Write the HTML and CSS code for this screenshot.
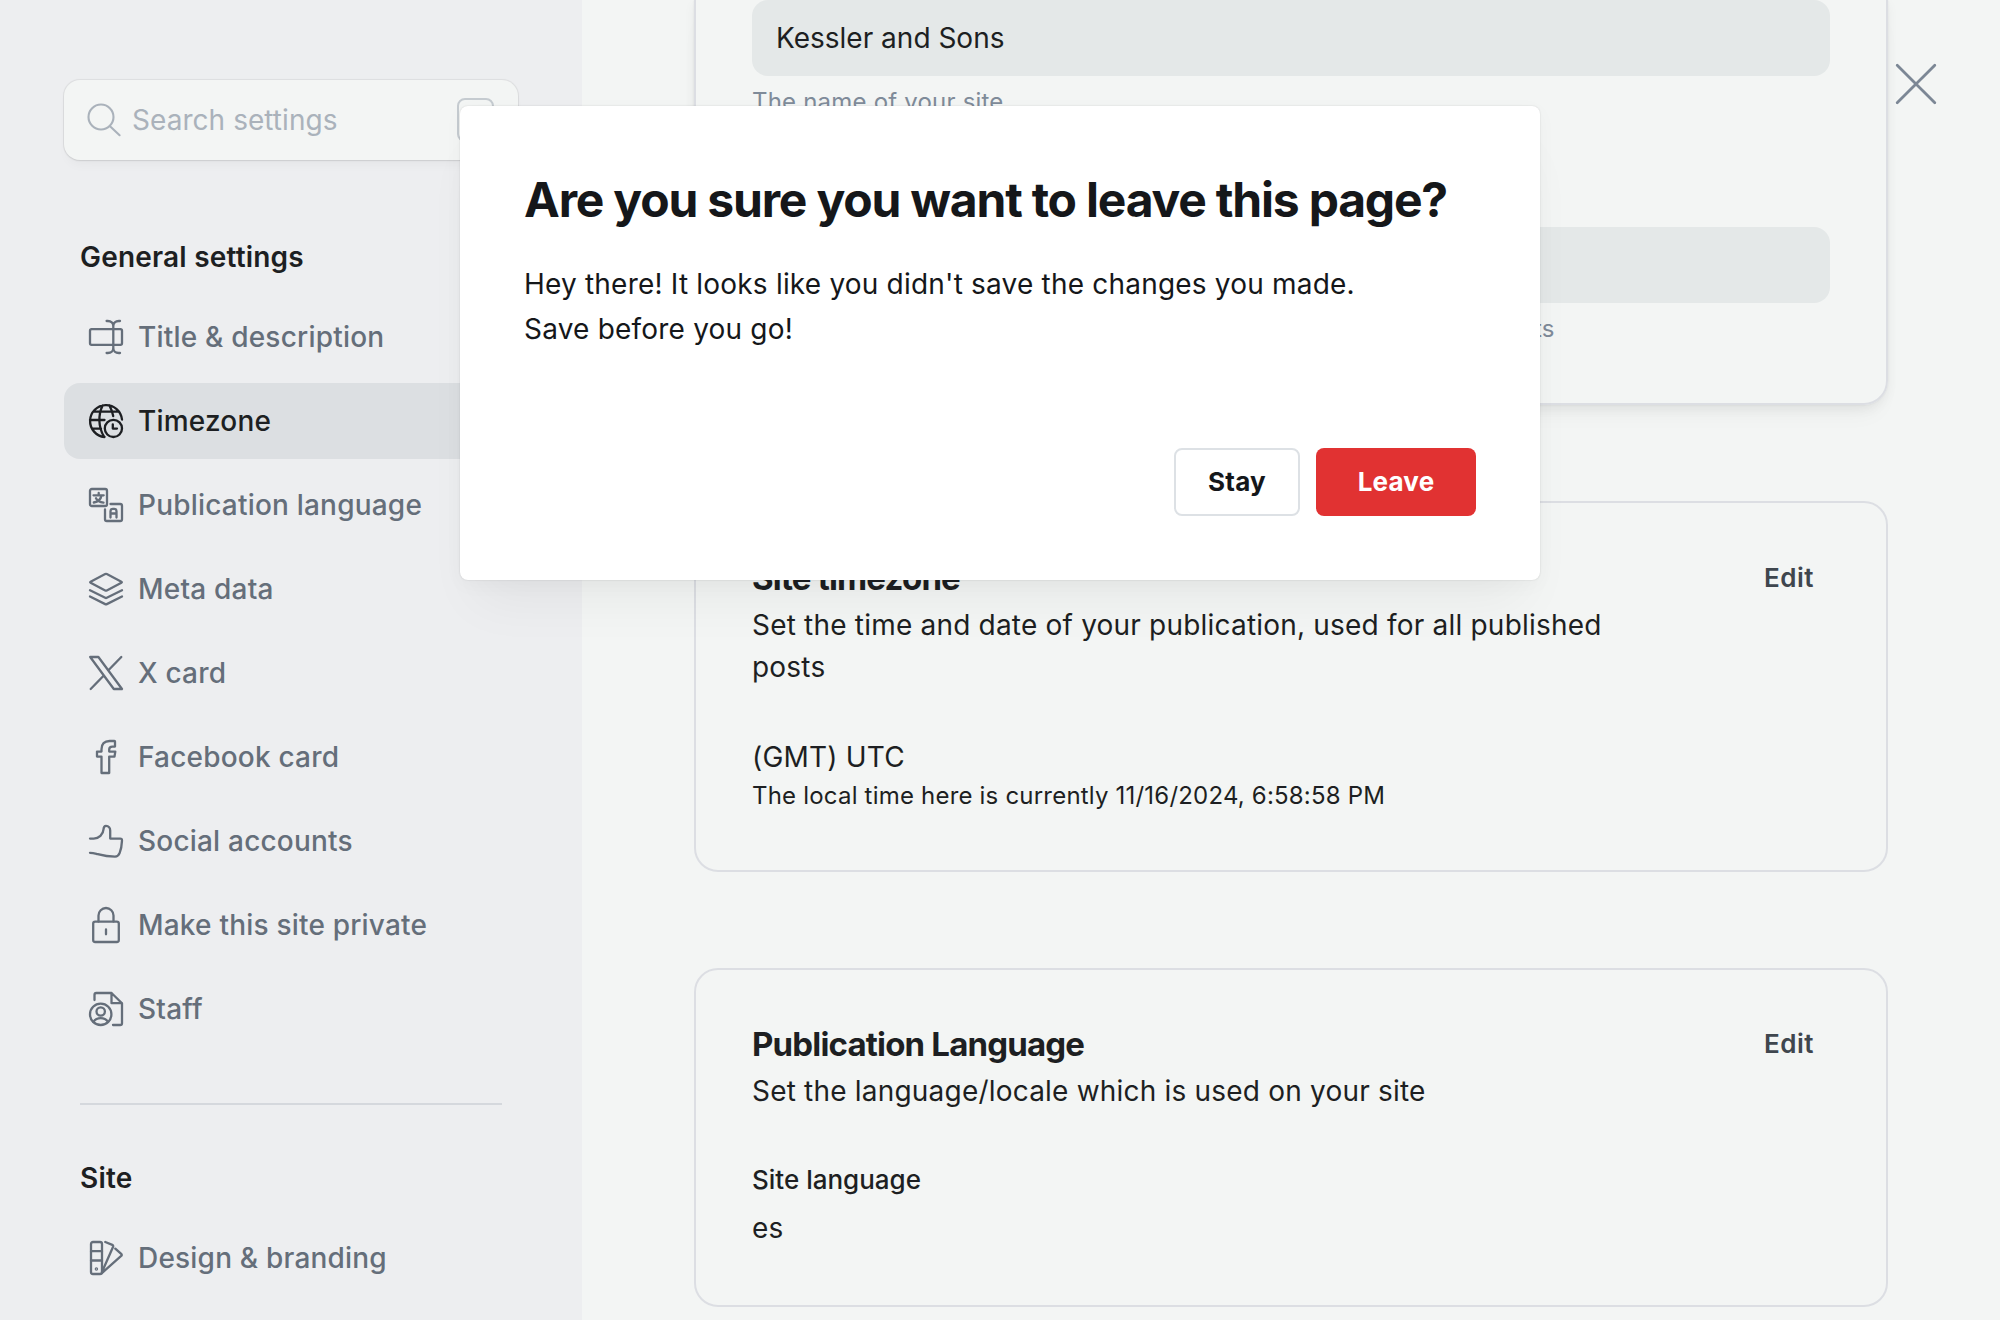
FILE: index.html
```html
<!DOCTYPE html>
<html lang="en">
<head>
<meta charset="utf-8">
<title>Settings</title>
<link rel="stylesheet" href="styles.css">
</head>
<body>
<div class="app">
  <aside class="sidebar">
    <div class="search">
      <svg class="search-icon" viewBox="0 0 34 34"><circle cx="14" cy="14" r="12.5"/><path d="M23 23.2l9.6 9"/></svg>
      <span class="search-text">Search settings</span>
      <span class="search-key"></span>
    </div>
    <h2 class="group-title">General settings</h2>
    <nav class="group">
      <a class="item"><svg class="icon" viewBox="0 0 34 34"><rect x="1" y="9.2" width="32" height="15.6" rx="1.6"/><path d="M24.3 6v22M17.6 1h1.2c3.3 0 5.5 2 5.5 5 0-3 2.2-5 5.5-5H31M17.6 33h1.2c3.3 0 5.5-2 5.5-5 0 3 2.2 5 5.5 5H31"/></svg>Title &amp; description</a>
      <a class="item item-active"><svg class="icon" viewBox="0 0 34 34"><path d="M33 15.5A16 16 0 1 0 15.5 33M4.3 7.7h25.4M1 16h14.5M3.2 24.6H12M13.6 1.5C9 11 9.2 23 15 32.7M20.4 1.5c1.9 3.400 3.2 7 3.8 10.500"/><circle cx="24.400" cy="24.400" r="8.600"/><path d="M23.800 20.300v4.300H28"/></svg>Timezone</a>
      <a class="item"><svg class="icon" viewBox="0 0 34 34"><rect x="1" y="1" width="17" height="17" rx="1.800"/><path d="M16 21.500v9.700A1.800 1.800 0 0 0 17.800 33h13.400a1.800 1.800 0 0 0 1.800-1.800V17.800a1.800 1.800 0 0 0-1.800-1.800H21.500M4.500 7.300h10.200M9.700 4.900v2.400M12.500 7.500c-.6 3.500-3.500 6.200-7.700 7M7 10.200c1.200 2.300 3.800 4 7.500 4.400M21.500 29.500v-6.300a2.300 2.300 0 0 1 2.300-2.300h1.400a2.300 2.300 0 0 1 2.300 2.300v6.300M21.500 25.500h6"/></svg>Publication language</a>
      <a class="item"><svg class="icon" viewBox="0 0 34 34"><path d="M16.200 2.100L1.600 9.700q-.9.500 0 1l14.600 7.800q.8.400 1.600 0l14.600-7.800q.9-.5 0-1L17.800 2.100q-.8-.4-1.600 0zM1 18.200l15.200 7.600q.8.400 1.600 0L33 18.200M1 24.500l15.200 7.600q.8.400 1.600 0L33 24.500"/></svg>Meta data</a>
      <a class="item"><svg class="icon" viewBox="0 0 34 34"><path d="M1.200 1h8.200L33 33h-8.200zM32.300 1L19.400 14.200M1.700 33l13.100-13.500"/></svg>X card</a>
      <a class="item"><svg class="icon" viewBox="0 0 34 34"><path d="M26 1.600v5h-2.600c-2.200 0-3.200.9-3.200 3v2h6.100l-.8 5h-5.300V33h-7.700V16.600H8v-5h4.500V9.200C12.500 4 15.300 1 20.600 1h4.800q.6 0 .6.600z"/></svg>Facebook card</a>
      <a class="item"><svg class="icon" viewBox="0 0 34 34"><path d="M1 14.600h3.700c5.200 0 9.500-4.300 9.800-9.200C14.600 3 15.500 1.800 17 1.800c2.600 0 4.200 2.200 4.200 4.800v8h10q1.900 0 1.800 2c-.2 4-1 8.900-2.300 12.300-1 2.600-2 3.700-4.700 3.700-9 0-14-1.600-18.500-2.800-2.200-.6-4.200-1-6.500-1"/></svg>Social accounts</a>
      <a class="item"><svg class="icon" viewBox="0 0 34 34"><rect x="4.200" y="13.600" width="25.600" height="20.400" rx="2"/><path d="M9.500 13.600V7.500a7.500 7.500 0 0 1 15 0v6.100M17 21.500v4.800"/></svg>Make this site private</a>
      <a class="item"><svg class="icon" viewBox="0 0 34 34"><circle cx="11.700" cy="22.300" r="10.700"/><circle cx="11.700" cy="19.500" r="4.200"/><path d="M4.400 29.800c3.500-4.900 11.100-4.900 14.600 0M5.500 8V2.800A1.800 1.800 0 0 1 7.300 1h15.200L33 11.200v20a1.800 1.800 0 0 1-1.800 1.800H24M22.500 1v10.200H33"/></svg>Staff</a>
    </nav>
    <hr class="divider">
    <h2 class="group-title">Site</h2>
    <nav class="group">
      <a class="item"><svg class="icon" viewBox="0 0 34 34"><rect x="2" y="1" width="11" height="32" rx="2"/><path d="M2 10.200h11M2 19.500h11M16.300 1l7 2.900q1.200.6.8 1.800L13 31M26.300 7.600l5.900 5.300q1 1 0 2L12.600 32.300"/><circle cx="7.400" cy="28" r=".6"/></svg>Design &amp; branding</a>
    </nav>
  </aside>

  <main class="content">
    <section class="card card-editing">
      <div class="input">Kessler and Sons</div>
      <p class="hint">The name of your site</p>
      <div class="input input-second"></div>
      <p class="hint">A short description, used in your theme, meta data and search results</p>
    </section>
    <section class="card">
      <header class="card-head"><h3 class="card-title">Site timezone</h3><a class="edit">Edit</a></header>
      <p class="desc">Set the time and date of your publication, used for all published posts</p>
      <p class="value">(GMT) UTC</p>
      <p class="note">The local time here is currently 11/16/2024, 6:58:58 PM</p>
    </section>
    <section class="card">
      <header class="card-head"><h3 class="card-title">Publication Language</h3><a class="edit">Edit</a></header>
      <p class="desc">Set the language/locale which is used on your site</p>
      <p class="label">Site language</p>
      <p class="value-small">es</p>
    </section>
  </main>

  <svg class="close" viewBox="0 0 40 40"><path d="M1.200 1.200l37.600 37.600M38.800 1.200L1.200 38.800"/></svg>

  <div class="modal">
    <h1 class="modal-title">Are you sure you want to leave this page?</h1>
    <p class="modal-text">Hey there! It looks like you didn't save the changes you made.</p>
    <p class="modal-text">Save before you go!</p>
    <div class="modal-actions">
      <a class="btn btn-stay">Stay</a>
      <a class="btn btn-leave">Leave</a>
    </div>
  </div>
</div>
</body>
</html>
```

FILE: styles.css
```css
* { box-sizing: border-box; margin: 0; padding: 0; }

body {
  font-family: Inter, "Liberation Sans", sans-serif;
  font-size: 28px;
  line-height: 42px;
  letter-spacing: .2px;
  color: #1d1f22;
  background: #f3f5f4;
}

svg { fill: none; stroke: currentColor; stroke-width: 2.3; stroke-linecap: round; stroke-linejoin: round; overflow: visible; }

.app { position: relative; display: flex; width: 2000px; height: 1320px; overflow: hidden; }

/* Sidebar */
.sidebar { width: 582px; flex: none; padding: 80px 64px 0; background: #edeef0; }
.search {
  display: flex; align-items: center; height: 80px; width: 454px; padding: 0 24px 0 23px;
  border-radius: 16px; background: #f3f5f4; color: #aab2bb; letter-spacing: .05px;
  box-shadow: 0 0 1px 1px rgba(0, 0, 0, .07), 0 1px 2px rgba(0, 0, 0, .05), 0 8px 12px -4px rgba(0, 0, 0, .04);
}
.search-icon { width: 34px; height: 34px; margin-right: 11px; stroke-width: 2.1; }
.search-text { flex: 1; }
.search-key { width: 37px; height: 44px; border: 2px solid #c5cbd0; border-radius: 8px; }
.group-title { margin: 77px 0 22px 16px; font-size: 28px; font-weight: 600; line-height: 40px; }
.group { display: flex; flex-direction: column; gap: 8px; width: 454px; }
.item {
  display: flex; align-items: center; gap: 15px; height: 76px; padding-left: 25px;
  border-radius: 16px; font-weight: 500; color: #656e7a;
}
.item-active { background: #dcdfe2; color: #1d1f22; }
.icon { width: 34px; height: 34px; flex: none; }
.divider { width: 422px; height: 2px; margin: 56px 0 0 16px; border: 0; background: #d5d8dd; }
.divider + .group-title { margin: 53px 0 22px 16px; }

/* Cards */
.content { width: 1194px; margin-left: 112px; display: flex; flex-direction: column; flex: none; gap: 96px; }
.card { padding: 53px 56px 56px; border: 2px solid #dcdee3; border-radius: 24px; flex: none; }
.card-editing {
  padding: 0 56px 57px; border-top: 0; border-radius: 0 0 24px 24px;
  box-shadow: 0 0 2px rgba(0, 0, 0, .08), 0 4px 12px rgba(0, 0, 0, .05), 0 16px 24px -10px rgba(0, 0, 0, .05);
}
.card-editing + .card { padding-top: 54px; }
.input { height: 76px; padding: 17px 24px; border-radius: 16px; background: #e4e8e8; letter-spacing: 0; }
.input-second { margin-top: 108px; }
.hint { margin-top: 9px; font-size: 24px; line-height: 34px; color: #7f8b99; }
.card-head { display: flex; justify-content: space-between; }
.card-title { font-size: 33px; font-weight: 700; line-height: 42px; letter-spacing: -.82px; }
.edit { margin-right: 16px; font-size: 26px; font-weight: 600; letter-spacing: .5px; color: #3f464e; }
.desc { width: 900px; margin-top: 5px; }
.value { margin-top: 48px; }
.note { font-size: 24px; line-height: 36px; }
.label { margin-top: 50px; font-size: 26px; font-weight: 500; line-height: 36px; letter-spacing: 0; }
.value-small { margin-top: 9px; }

/* Overlays */
.close { position: absolute; left: 1896px; top: 64px; width: 40px; height: 40px; stroke-width: 2.8; color: #7c8795; }
.modal {
  position: absolute; left: 460px; top: 106px; width: 1080px; height: 474px; padding: 64px;
  border-radius: 8px; background: #fff; color: #15171a;
  box-shadow: 0 0 2px rgba(0, 0, 0, .14), 0 5px 20px rgba(0, 0, 0, .03), 0 36px 50px -16px rgba(0, 0, 0, .05);
}
.modal-title { font-size: 48px; font-weight: 700; line-height: 60px; letter-spacing: -1.2px; }
.modal-title + .modal-text { margin-top: 32px; }
.modal-text { line-height: 45px; }
.modal-actions { display: flex; justify-content: flex-end; gap: 16px; margin-top: 96px; }
.btn { display: flex; align-items: center; justify-content: center; height: 68px; border-radius: 8px; font-size: 26px; font-weight: 700; }
.btn-stay { width: 126px; border: 2px solid #dde1e5; }
.btn-leave { width: 160px; background: #e13232; color: #fff; }
```
